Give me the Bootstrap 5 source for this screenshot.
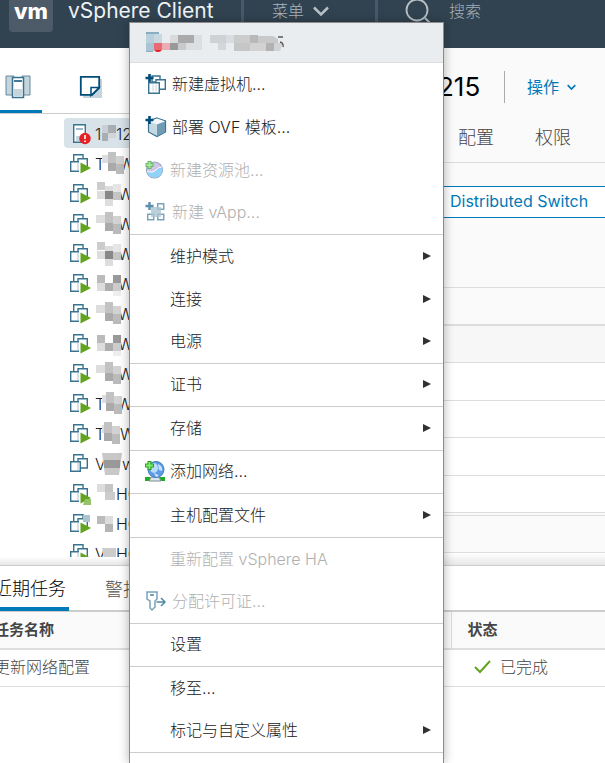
<!DOCTYPE html>
<html lang="zh-CN">
<head>
<meta charset="utf-8">
<meta name="viewport" content="width=device-width, initial-scale=1">
<title>vSphere Client</title>
<link href="https://cdn.jsdelivr.net/npm/bootstrap@5.3.0/dist/css/bootstrap.min.css" rel="stylesheet">
<style>
body{font-family:Inter,"Noto Sans CJK SC",sans-serif;font-size:16px;font-weight:300;line-height:24px;color:#212121;background:#fff;overflow:hidden}
a{text-decoration:none;color:inherit}
svg{display:block;flex:none}
button{font:inherit}
.topbar{height:48px;background:#314351;color:#adb5bc}
.topbar>*{height:32px;padding-bottom:10px}
.brand-box{width:44px;margin-left:9px;background:#4d5b68;border-radius:0 0 4px 4px;color:#fff;font-weight:800;font-size:22px;line-height:22px}
.brand-name{width:188px;padding-left:15px;font-size:21px;font-weight:400;color:#eef2f5}
.top-cell{border-left:3px solid #485969;width:134px;height:48px;padding-bottom:26px}
.search-cell{padding-left:27px}
.search-cell input{background:none;border:0;color:#adb5bc;padding:0;outline:0;min-width:0;font-weight:300}
.search-cell input::placeholder{color:#a4adb4;opacity:1}
.workspace{height:517px}
.side{width:300px}
.side-tabs{height:66px;border-bottom:1px solid #ccc}
.side-tabs button{border:0;background:none;padding:0;height:65px}
.side-tabs .tab-hosts{width:42px;border-bottom:3px solid #0079b8;padding:16px 0 0 5px}
.side-tabs .tab-vms{margin-left:37px;padding-top:12px}
.tree{margin:4px 0 0 64px;height:439px;overflow:hidden}
.tree-row{height:30px;padding-left:5px;padding-top:1px;border-radius:4px 0 0 4px;font-size:16px}
.tree-row.picked{background:#d8e3e9}
.tree-row svg{position:relative}
.tail{margin-left:-5px}
.lead-char{width:11px;padding-left:4px}
.splitter{height:8px;background:linear-gradient(#fff,#e6e6e6)}
.main{background:#fafafa;min-width:0}
.title-row{height:78px}
.object-name{font-size:26px;line-height:32px;color:#000;margin:0;font-weight:400;padding-left:138px;width:181px}
.actions{border:0;border-left:1px solid #aaa;background:none;color:#0079b8;height:32px;margin-left:23px;padding:0 0 0 22px;font-weight:400}
.object-tabs{height:37px;border-bottom:1px solid #ddd;font-size:18px;color:#454545;padding-left:158px;gap:41px}
.switch-btn{margin-top:23px;height:32px;border:1px solid #0079b8;border-right:0;background:#fff;color:#0079b8;text-align:left;padding:0 0 2px 149px;width:100%;flex:none;white-space:nowrap;font-weight:400}
.band{border-bottom:1px solid #ddd;height:37px;flex:none}
.band-tall{height:70px}
.band-thick{height:38px;border-bottom-width:2px}
.band-rows{display:grid;grid-auto-rows:1fr;height:150px;background:#fff;flex:none}
.band-rows>div{border-bottom:1px solid #ddd}
.band-grey{background:#f7f7f7}
.band-thin{height:3px}
.tasks{margin-left:-6px;border-top:1px solid #ccc}
.task-tabs{height:46px;font-size:18px;border-bottom:2px solid #ccc;color:#555}
.task-tabs a{height:45px;padding-top:2px}
.task-tabs .current{color:#000;width:75px;border-bottom:4px solid #0079b8;padding-top:4px}
.task-tabs .other{padding-left:36px}
.task-table{table-layout:fixed;width:100%;color:#454545}
.task-table th{height:37px;background:#fafafa;border-bottom:2px solid #ddd;font-size:15px;padding:0}
.task-table td{height:37px;border-bottom:1px solid #ddd;padding:0 0 2px}
.task-table .name-col{width:457px;border-right:1px solid #ddd}
.task-table .state-head{padding-left:16px}
.task-table .state-cell{padding-left:23px}
.ctx{position:absolute;left:129px;top:22px;width:315px;background:#fff;border:1px solid #8c8c8c;border-bottom:0;box-shadow:0 0 10px rgba(0,0,0,.3);height:calc(100vh - 22px);overflow:hidden}
.ctx-head{height:40px;background:#e9edf0;border-bottom:1px solid #ddd;padding-left:16px}
.ctx-group{border-bottom:1px solid #ccc;display:flex;flex-direction:column}
.ctx-item{border:0;background:none;width:100%;height:43px;padding:0 12px 2px 15px;color:#212121;display:flex;align-items:center;text-align:left;flex:none}
.ctx-item:last-child{height:42px}
.ctx-roomy .ctx-item{height:43px}
.ctx-item:disabled{color:#b0b0b0}
.slot{width:25px;flex:none}
.slot-wide{width:27px}
</style>
<script src="https://cdn.jsdelivr.net/npm/bootstrap@5.3.0/dist/js/bootstrap.bundle.min.js"></script>
</head>
<body>
<svg width="0" height="0" class="position-absolute" aria-hidden="true">
<defs>
<g id="vm-boxes" fill="#fff" stroke="#39738f" stroke-width="1.4"><path d="M4.700 8V1.700H14V5"/><path d="M9 8V5.700H18.300V15H12"/><path d="M1.700 8.700H11.300V18.300H1.700z"/><path d="M9 10v7" stroke="#c5d4dd"/></g>
<symbol id="vm" viewBox="0 0 22 22"><use href="#vm-boxes"/></symbol>
<symbol id="vm-on" viewBox="0 0 22 22"><use href="#vm-boxes"/><path d="M10 7.500H13V19H10z" fill="#fff"/><path d="M11.500 9.500L22 15l-10.500 5.500z" fill="#62a420"/></symbol>
<symbol id="arrow" viewBox="0 0 8 10"><path d="M0 1l8 4-8 4z" fill="#313131"/></symbol>
<symbol id="mosaic-a" viewBox="0 0 28 28"><path d="M2 2h8v8H2z" fill="#ccc"/><path d="M10 6h8v8h-8z" fill="#dcdcdc"/><path d="M18 4h8v9h-8z" fill="#e6e6e6"/><path d="M10 11h8v8h-8z" fill="#888"/><path d="M2 11h8v8H2z" fill="#ddd"/><path d="M18 12h8v8h-8z" fill="#c5c5c5"/><path d="M10 19h8v7h-8z" fill="#ddd"/></symbol>
<symbol id="mosaic-b" viewBox="0 0 28 28"><path d="M2 5h8v8H2z" fill="#bbb"/><path d="M18 5h8v8h-8z" fill="#999"/><path d="M2 13h8v8H2z" fill="#ddd"/><path d="M10 13h8v8h-8z" fill="#adadad"/><path d="M18 13h8v8h-8z" fill="#ccc"/><path d="M18 21h8v5h-8z" fill="#eee"/></symbol>
<symbol id="mosaic-c" viewBox="0 0 28 28"><path d="M1 5h9v8H1z" fill="#ddd"/><path d="M10 2h8v11h-8z" fill="#c2c2c2"/><path d="M18 6h8v8h-8z" fill="#d2d2d2"/><path d="M10 13h8v8h-8z" fill="#aaa"/><path d="M18 14h8v10h-8z" fill="#bbb"/></symbol>
</defs>
</svg>

<header class="topbar d-flex align-items-start">
  <a href="#" class="brand-box d-flex align-items-center justify-content-center">vm</a>
  <div class="brand-name d-flex align-items-center text-nowrap">vSphere Client</div>
  <button class="top-cell border-top-0 border-end-0 border-bottom-0 bg-transparent text-reset d-flex align-items-center ps-4 pt-0 gap-2"><span class="ms-1">菜单</span><svg width="18" height="12" viewBox="0 0 18 12" fill="none" stroke="#b8c0c6" stroke-width="2.500"><path d="M2 2.500l7 7 7-7"/></svg></button>
  <label class="top-cell search-cell flex-grow-1 d-flex align-items-center"><svg width="28" height="26" viewBox="0 0 28 26" fill="none" stroke="#b8c0c6" stroke-width="1.800"><circle cx="12" cy="12" r="10.500"/><path d="M20 20l4.500 4.500"/></svg><input class="ms-3 w-50" type="text" placeholder="搜索" aria-label="搜索"></label>
</header>

<div class="workspace d-flex">
  <aside class="side flex-shrink-0">
    <div class="side-tabs d-flex">
      <button class="tab-hosts d-flex align-items-center" aria-label="主机和集群"><svg width="26" height="26" viewBox="0 0 26 26"><path d="M1 2h8v19H1zM17 2h8v19h-8z" fill="#c5d4dd" stroke="#69899b"/><path d="M7.500 3.500h11v20h-11z" fill="#fff" stroke="#39738f" stroke-width="1.500"/><path d="M9 7h8" stroke="#004d7a" stroke-width="1.500"/><path d="M9 15h8v7H9z" fill="#c5d4dd"/></svg></button>
      <button class="tab-vms" aria-label="虚拟机和模板"><svg width="24" height="24" viewBox="0 0 24 24"><path d="M4 4h19v19H4z" fill="#c5d4dd"/><path d="M1.800 1.800h18.400v11l-7 7H1.800z" fill="#fff" stroke="#004d7a" stroke-width="1.800"/><path d="M20 12.500h-8v8z" fill="#fff" stroke="#004d7a" stroke-width="1.500"/></svg></button>
    </div>
    <div class="tree">
      <a href="#" class="tree-row picked d-flex align-items-center"><svg width="22" height="22" viewBox="0 0 22 22"><path d="M4.700 1.700h11.600v17.600H4.700z" fill="#fff" stroke="#39738f" stroke-width="1.400"/><path d="M7 6h7" stroke="#39738f"/><path d="M7 13h7v5H7z" fill="#c5d4dd"/><circle cx="16" cy="15.500" r="5.700" fill="#e62126"/><path d="M16 12v4M16 17.500v1.500" stroke="#fff" stroke-width="1.600"/></svg><span class="lead-char">1</span><svg width="14" height="28" viewBox="4 0 14 28"><path d="M4 5h8v8H4z" fill="#c8d0d5"/><path d="M10 5h8v8h-8z" fill="#a9aeb5"/><path d="M4 13h6v8H4z" fill="#a9aeb5"/><path d="M10 13h8v5h-8z" fill="#d1d5d8"/></svg><span>12</span></a>
      <a href="#" class="tree-row d-flex align-items-center"><svg width="22" height="22"><use href="#vm-on"/></svg><span class="lead-char">T</span><svg width="22" height="28" viewBox="4 0 22 28"><use href="#mosaic-c" width="28" height="28"/></svg><span class="tail">W</span></a>
      <a href="#" class="tree-row d-flex align-items-center"><svg width="22" height="22"><use href="#vm-on"/></svg><svg class="ms-1" width="28" height="28"><use href="#mosaic-a"/></svg><span class="tail">W</span></a>
      <a href="#" class="tree-row d-flex align-items-center"><svg width="22" height="22"><use href="#vm-on"/></svg><svg class="ms-1" width="28" height="28"><use href="#mosaic-c"/></svg><span class="tail">W</span></a>
      <a href="#" class="tree-row d-flex align-items-center"><svg width="22" height="22"><use href="#vm-on"/></svg><svg class="ms-1" width="28" height="28"><use href="#mosaic-a"/></svg><span class="tail">W</span></a>
      <a href="#" class="tree-row d-flex align-items-center"><svg width="22" height="22"><use href="#vm-on"/></svg><svg class="ms-1" width="28" height="28"><use href="#mosaic-b"/></svg><span class="tail">W</span></a>
      <a href="#" class="tree-row d-flex align-items-center"><svg width="22" height="22"><use href="#vm-on"/></svg><svg class="ms-1" width="28" height="28"><use href="#mosaic-c"/></svg><span class="tail">W</span></a>
      <a href="#" class="tree-row d-flex align-items-center"><svg width="22" height="22"><use href="#vm-on"/></svg><svg class="ms-1" width="28" height="28"><use href="#mosaic-b"/></svg><span class="tail">W</span></a>
      <a href="#" class="tree-row d-flex align-items-center"><svg width="22" height="22"><use href="#vm-on"/></svg><svg class="ms-1" width="28" height="28"><use href="#mosaic-c"/></svg><span class="tail">W</span></a>
      <a href="#" class="tree-row d-flex align-items-center"><svg width="22" height="22"><use href="#vm-on"/></svg><span class="lead-char">T</span><svg width="20" height="28" viewBox="6 0 20 28"><use href="#mosaic-c" width="28" height="28"/></svg><span class="tail">W</span></a>
      <a href="#" class="tree-row d-flex align-items-center"><svg width="22" height="22"><use href="#vm-on"/></svg><span class="lead-char">T</span><svg width="18" height="28" viewBox="8 0 18 28"><use href="#mosaic-c" width="28" height="28"/></svg><span>W</span></a>
      <a href="#" class="tree-row d-flex align-items-center"><svg width="22" height="22"><use href="#vm"/></svg><span class="lead-char">V</span><svg width="20" height="28" viewBox="0 0 20 28"><path d="M0 3h20l-3 22H3z" fill="#c8c8c8"/><path d="M2 10h16v8H2z" fill="#999"/></svg><span>w</span></a>
      <a href="#" class="tree-row d-flex align-items-center"><svg width="22" height="22"><use href="#vm-on"/><path d="M14 22l2-6h6v6z" fill="#94c267"/></svg><svg class="ms-1" width="21" height="28" viewBox="0 0 21 28"><path d="M2 4h8v8H2z" fill="#ddd"/><path d="M10 4h8v8h-8z" fill="#c5c5c5"/><path d="M10 12h10v8H10z" fill="#ccc"/></svg><span>HO</span></a>
      <a href="#" class="tree-row d-flex align-items-center"><svg width="22" height="22"><use href="#vm-on"/><path d="M14 2h7v7h-7z" fill="#adc4cf"/></svg><svg class="ms-1" width="21" height="28" viewBox="0 0 21 28"><path d="M2 6h8v8H2z" fill="#bbb"/><path d="M10 6h8v8h-8z" fill="#ddd"/><path d="M10 14h8v8h-8z" fill="#b5b5b5"/></svg><span>HO</span></a>
      <a href="#" class="tree-row d-flex align-items-center"><svg width="22" height="22"><use href="#vm-on"/></svg><span class="lead-char">V</span><svg width="14" height="28" viewBox="0 0 14 28"><path d="M0 8h14v11H2z" fill="#ccc"/></svg><span>HO</span></a>
    </div>
    <div class="splitter"></div>
  </aside>

  <main class="main flex-grow-1 d-flex flex-column">
    <div class="title-row d-flex align-items-center">
      <h1 class="object-name">215</h1>
      <button class="actions d-flex align-items-center gap-2 text-nowrap"><span>操作</span><svg width="9" height="7" viewBox="0 0 9 7" fill="none" stroke="#0079b8" stroke-width="1.700"><path d="M.7 1.200l3.800 3.800 3.800-3.800"/></svg></button>
    </div>
    <nav class="object-tabs d-flex"><a href="#">配置</a><a href="#">权限</a></nav>
    <button class="switch-btn">Distributed Switch</button>
    <div class="band band-tall"></div>
    <div class="band band-thick"></div>
    <div class="band band-grey"></div>
    <div class="band-rows"><div></div><div></div><div></div><div></div></div>
    <div class="band band-thin"></div>
    <div class="band"></div>
    <div class="splitter flex-grow-1"></div>
  </main>
</div>

<section class="tasks">
  <nav class="task-tabs d-flex"><a href="#" class="current d-flex align-items-center text-nowrap">近期任务</a><a href="#" class="other d-flex align-items-center">警报</a></nav>
  <table class="task-table">
    <thead><tr><th class="name-col" scope="col">任务名称</th><th class="state-head" scope="col">状态</th></tr></thead>
    <tbody><tr><td>更新网络配置</td><td class="state-cell"><span class="d-flex align-items-center"><svg class="me-2" width="18" height="14" viewBox="0 0 18 14" fill="none" stroke="#62a420" stroke-width="2"><path d="M1 7l5 5L16 1"/></svg>已完成</span></td></tr></tbody>
  </table>
</section>

<div class="ctx" role="menu">
  <div class="ctx-head d-flex align-items-center">
    <svg width="140" height="22" viewBox="0 0 140 22"><path d="M0 1h13M0 19h7M.5 1v18" stroke="#6c9bb2" stroke-width="1.500"/><path d="M0 2h8v9H0z" fill="#b8d0db"/><path d="M8 2h8v9H8z" fill="#c8d8e1"/><path d="M0 11h8v8H0z" fill="#a9c4d2"/><circle cx="12" cy="16" r="4" fill="#e62126"/><path d="M8 11h8v7H8z" fill="#e86a72"/><path d="M16 11h8v7h-8z" fill="#ebadb3"/><path d="M24 11h8v7h-8z" fill="#999"/><path d="M24 3h8v8h-8z" fill="#d8dadc"/><path d="M48 3h8v8h-8zM40 11h16v7H40z" fill="#dcdfe1"/><path d="M32 3h16v8H32z" fill="#aaa"/><path d="M32 11h8v7h-8z" fill="#c8c9cb"/><path d="M64 3h16v8H64z" fill="#cfd1d4"/><path d="M72 11h8v7h-8z" fill="#d4d6d9"/><path d="M80 3h8v8h-8z" fill="#dadde0"/><path d="M88 3h16v8H88z" fill="#ccc"/><path d="M104 3h8v8h-8z" fill="#b8b8b8"/><path d="M112 4h15l5 3v4h-20z" fill="#c8c9cb"/><path d="M88 11h16v8H88z" fill="#c5c6c8"/><path d="M104 11h16v8h-16z" fill="#d2d2d3"/><path d="M120 11h8v8h-8z" fill="#b2b2b3"/><path d="M128 11h9l-3 8h-6z" fill="#d2d3d5"/><path d="M132 5h5M134 10q4 1 3 5" fill="none" stroke="#555" stroke-width="1.300"/></svg>
  </div>
  <div class="ctx-group">
    <button class="ctx-item"><span class="slot slot-wide"><svg width="22" height="22" viewBox="0 0 22 22"><g fill="#fff" stroke="#39738f" stroke-width="1.400"><path d="M7 3h8v6H7z"/><path d="M11 6.700h9.300v9.600H11z"/><path d="M3.700 9.700h10.600v10.600H3.700z"/></g><path d="M8 11.500v7M11 11.500v7" stroke="#c5d4dd"/><path d="M4.500 1v8M.5 5h8" stroke="#004d7a" stroke-width="2.600"/></svg></span>新建虚拟机...</button>
    <button class="ctx-item"><span class="slot slot-wide"><svg width="22" height="22" viewBox="0 0 22 22"><path d="M12 2l8.500 3v11L12 20.500 3.500 16V5z" fill="#c5d9e4" stroke="#39738f" stroke-width="1.200"/><path d="M4 5.500l8 3 8-3L12 2.500z" fill="#f2f7fa"/><path d="M12 8.500l8-3v10.300l-8 4.200z" fill="#6f9bb3"/><path d="M4.500 0v8M.5 4h8" stroke="#004d7a" stroke-width="2.600"/></svg></span>部署 OVF 模板...</button>
    <button class="ctx-item" disabled><span class="slot"><svg width="20" height="20" viewBox="0 0 20 20"><circle cx="9.500" cy="10" r="8" fill="#cfc6ea" stroke="#93a6b8" stroke-width="1.200"/><path d="M2 11c3 2 7 1 9-1s3-3 6-3c1.500 5-1 10.500-7.500 10.500-4 0-7-2-7.500-6.500z" fill="#8fd3fa"/><path d="M2 11c3 2 7 1 9-1s3-3 6-3" fill="none" stroke="#fff"/><path d="M4.500 1v8M.5 5h8" stroke="#69b765" stroke-width="4"/><path d="M4.500 2v6M1.500 5h6" stroke="#a5e89c" stroke-width="2"/></svg></span>新建资源池...</button>
    <button class="ctx-item" disabled><span class="slot slot-wide"><svg width="22" height="22" viewBox="0 0 22 22"><g fill="#fff" stroke="#79a3b9" stroke-width="1.500"><path d="M12.700 2.700h6v5.600h-6zM12.700 13.200h6v5.600h-6zM2.700 13.200h6v5.600h-6z"/></g><path d="M6 6h10v10H6z" fill="#aac4d2" fill-opacity=".8"/><path d="M4.500 1v8M.5 5h8" stroke="#5b8fab" stroke-width="2.400"/></svg></span>新建 vApp...</button>
  </div>
  <div class="ctx-group">
    <button class="ctx-item"><span class="slot"></span><span class="flex-grow-1">维护模式</span><svg width="8" height="10"><use href="#arrow"/></svg></button>
    <button class="ctx-item"><span class="slot"></span><span class="flex-grow-1">连接</span><svg width="8" height="10"><use href="#arrow"/></svg></button>
    <button class="ctx-item"><span class="slot"></span><span class="flex-grow-1">电源</span><svg width="8" height="10"><use href="#arrow"/></svg></button>
  </div>
  <div class="ctx-group"><button class="ctx-item"><span class="slot"></span><span class="flex-grow-1">证书</span><svg width="8" height="10"><use href="#arrow"/></svg></button></div>
  <div class="ctx-group ctx-roomy"><button class="ctx-item"><span class="slot"></span><span class="flex-grow-1">存储</span><svg width="8" height="10"><use href="#arrow"/></svg></button></div>
  <div class="ctx-group"><button class="ctx-item"><span class="slot"><svg width="20" height="22" viewBox="0 0 20 22"><path d="M0 17h20v4H0z" fill="#20ad20"/><path d="M6 17h8l2 4H4z" fill="#dce5ee" stroke="#7e8c99"/><circle cx="11" cy="9.500" r="8" fill="#5b9be8" stroke="#477cba"/><ellipse cx="9" cy="8" rx="4" ry="5" fill="#b9dcfa"/><path d="M13 4q5 2 4 7l-3-1zM9 13q4 1 5 3l-3 1z" fill="#c8e3fc"/><path d="M4.500 1v9M0 5.500h9" stroke="#2c9c2c" stroke-width="4"/><path d="M4.500 2v7M1 5.500h7" stroke="#7cf06a" stroke-width="1.800"/></svg></span>添加网络...</button></div>
  <div class="ctx-group ctx-roomy"><button class="ctx-item"><span class="slot"></span><span class="flex-grow-1">主机配置文件</span><svg width="8" height="10"><use href="#arrow"/></svg></button></div>
  <div class="ctx-group">
    <button class="ctx-item" disabled><span class="slot"></span>重新配置 vSphere HA</button>
    <button class="ctx-item" disabled><span class="slot slot-wide"><svg width="22" height="22" viewBox="0 0 22 22" fill="none" stroke="#79a3b9" stroke-width="1.500"><path d="M2 2h10v7l-2 2v6l-3 3-2-2v-7L2 9z"/><path d="M5 5h4" stroke-width="2"/><path d="M11.500 12h8M16 8l4 4-4 4" stroke="#5088a8"/></svg></span>分配许可证...</button>
  </div>
  <div class="ctx-group"><button class="ctx-item"><span class="slot"></span>设置</button></div>
  <div class="ctx-group">
    <button class="ctx-item"><span class="slot"></span>移至...</button>
    <button class="ctx-item"><span class="slot"></span><span class="flex-grow-1">标记与自定义属性</span><svg width="8" height="10"><use href="#arrow"/></svg></button>
  </div>
</div>
</body>
</html>
